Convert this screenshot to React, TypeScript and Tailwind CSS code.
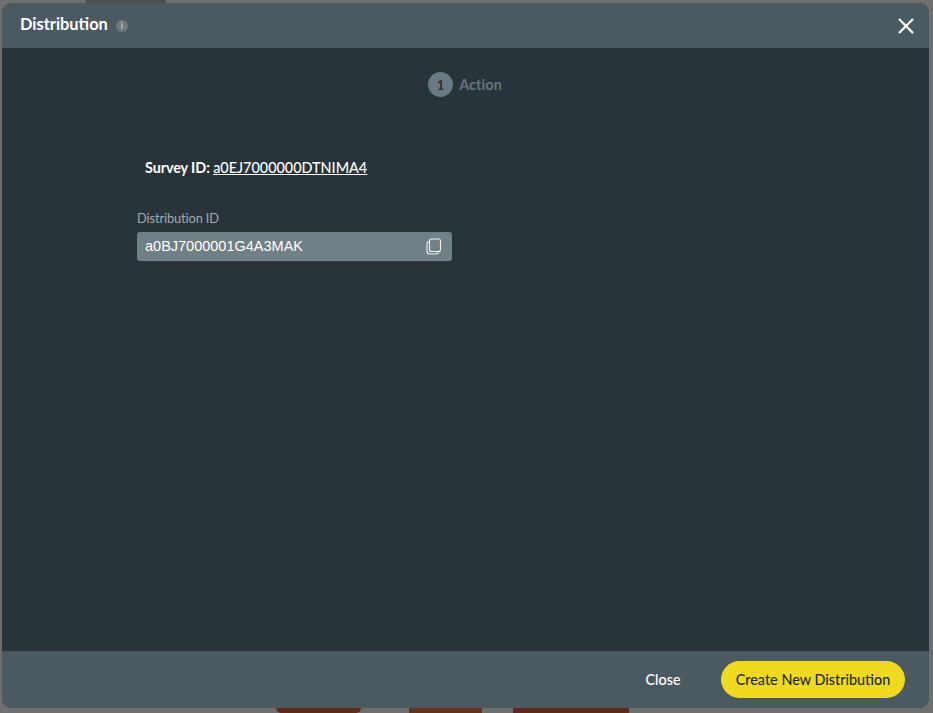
import React from "react";

const lato = "font-['Lato',sans-serif]";

export default function App() {
  return (
    <div className={`relative w-[933px] h-[713px] overflow-hidden bg-[#6f6f6f] pt-[3px] pl-[2px] pr-[4px] pb-[5px] ${lato}`}>
      <div className="absolute left-[86px] top-0 w-[80px] h-[3px] bg-[#4f4f4f]" />
      <div className="absolute left-[276px] top-[708px] w-[85px] h-[5px] bg-[#5f2a1a] rounded-b-[14px]" />
      <div className="absolute left-[409px] top-[708px] w-[73px] h-[5px] bg-[#5f3520]" />
      <div className="absolute left-[513px] top-[708px] w-[116px] h-[5px] bg-[#5f2a1a]" />
      <div className="relative flex flex-col h-full rounded-[10px] overflow-hidden bg-[#28343a]">
        <header className="flex items-center justify-between h-[45px] shrink-0 bg-[#4b5a61] pl-[18px] pr-[14px]">
          <div className="flex items-center gap-[8px]">
            <h1 className="text-[16.4px] font-bold text-white leading-none -mt-[3px]">Distribution</h1>
            <span className="flex items-center justify-center w-[12px] h-[12px] rounded-full bg-[#6d7a80] text-[9px] font-bold leading-none text-[#c5cbce]">i</span>
          </div>
          <svg width="18" height="18" viewBox="0 0 18 18" fill="none" stroke="white" strokeWidth="2.2">
            <path d="M2 2 L16 16 M16 2 L2 16" />
          </svg>
        </header>
        <main className="flex-1 min-h-0">
          <div className="flex items-center justify-center gap-[6px] pt-[24px] pr-[1px]">
            <span className="flex items-center justify-center w-[25px] h-[25px] rounded-full bg-[#6b7a82] text-[14px] font-bold leading-none text-[#29333a]">1</span>
            <span className="text-[14.4px] font-bold text-[#68757b] tracking-[0.1px]">Action</span>
          </div>
          <div className="pl-[135px] pt-[61px] w-[450px]">
            <p className="pl-[8px] text-[14.4px] leading-[20px] font-medium text-white">
              <span className="font-bold tracking-[-0.1px]">Survey ID: </span>
              <a className="underline">a0EJ7000000DTNIMA4</a>
            </p>
            <label className="block mt-[31px] text-[12.8px] leading-[18px] tracking-[-0.1px] text-[#a6abad]">Distribution ID</label>
            <div className="flex items-center justify-between mt-[5px] w-[315px] h-[29px] rounded-[3px] bg-[#717f86] pl-[8px] pr-[10px]">
              <span className="font-['Liberation_Sans',sans-serif] text-[14.5px] text-white">a0BJ7000001G4A3MAK</span>
              <svg width="16" height="17" viewBox="0 0 16 17" fill="none" stroke="#eef1f2" strokeWidth="1.1">
                <rect x="3.5" y="1" width="11" height="12.5" rx="2" />
                <path d="M3.5 3.5 C1.8 3.7 1 4.5 1 6 V13 C1 15 2 16 4 16 H10 C11.5 16 12.3 15.2 12.5 13.5" />
              </svg>
            </div>
          </div>
        </main>
        <footer className="flex items-center justify-end gap-[22px] h-[57px] shrink-0 bg-[#4b5a61] pr-[24px]">
          <button className="w-[72px] text-center text-[14.4px] font-medium text-white">Close</button>
          <button className="h-[37px] w-[184px] rounded-full bg-[#f0da21] text-[14.4px] font-medium text-[#1f2a2f]">Create New Distribution</button>
        </footer>
      </div>
    </div>
  );
}
